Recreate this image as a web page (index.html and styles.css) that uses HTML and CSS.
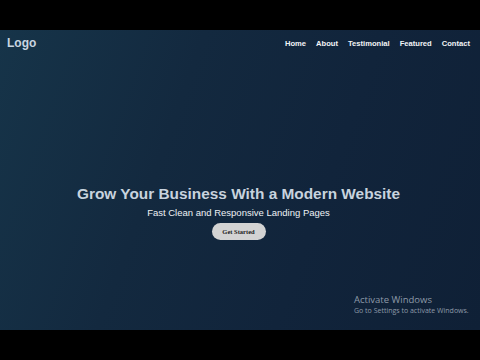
FILE: index.html
```html
<!DOCTYPE html>
<html>
<head>
<meta charset="utf-8">
<link rel="stylesheet" href="styles.css">
</head>
<body>
<div class="bar"></div>
<main class="page">
  <header class="nav">
    <div class="logo">Logo</div>
    <nav class="links">
      <a>Home</a><a>About</a><a>Testimonial</a><a>Featured</a><a>Contact</a>
    </nav>
  </header>
  <section class="hero">
    <h1>Grow Your Business With a Modern Website</h1>
    <p>Fast Clean and Responsive Landing Pages</p>
    <button class="cta">Get Started</button>
  </section>
  <div class="activate">
    <div class="act-title">Activate Windows</div>
    <div class="act-sub">Go to Settings to activate Windows.</div>
  </div>
</main>
<div class="bar"></div>
</body>
</html>
```
FILE: styles.css
```css
html, body { margin: 0; padding: 0; }
body { background: #000; width: 480px; height: 360px; overflow: hidden; font-family: "Liberation Sans", Arial, sans-serif; }
.bar { height: 30px; background: #000; }
.page {
  position: relative;
  height: 300px;
  display: flex;
  flex-direction: column;
  background:
    linear-gradient(110deg, #163449 0%, #13293f 35%, #11243b 65%, #0f2036 100%);
}
.nav { display: flex; justify-content: space-between; align-items: center; padding: 3px 10px 0 7px; height: 20px; }
.logo { color: #c9d5e1; font-weight: bold; font-size: 12px; }
.links { display: flex; gap: 10px; }
.links a { color: #f2f4f7; font-weight: bold; font-size: 7.6px; }
.hero { display: flex; flex-direction: column; align-items: center; margin-top: 132px; padding-right: 3px; }
.hero h1 { margin: 0; color: #c8d3de; font-size: 15.4px; font-weight: bold; }
.hero p { margin: 4px 0 0; color: #eef1f5; font-size: 9.5px; }
.cta { margin-top: 5px; width: 54px; height: 17px; border: none; border-radius: 9px; background: #d3d3d3; color: #222; font-family: "Liberation Serif", serif; font-weight: bold; font-size: 6.5px; padding: 0; }
.activate { position: absolute; left: 354px; top: 264px; color: #8e9aa8; font-family: "Open Sans", "DejaVu Sans", sans-serif; }
.act-title { font-size: 9.5px; line-height: 12px; }
.act-sub { font-size: 7px; line-height: 10px; }
```
